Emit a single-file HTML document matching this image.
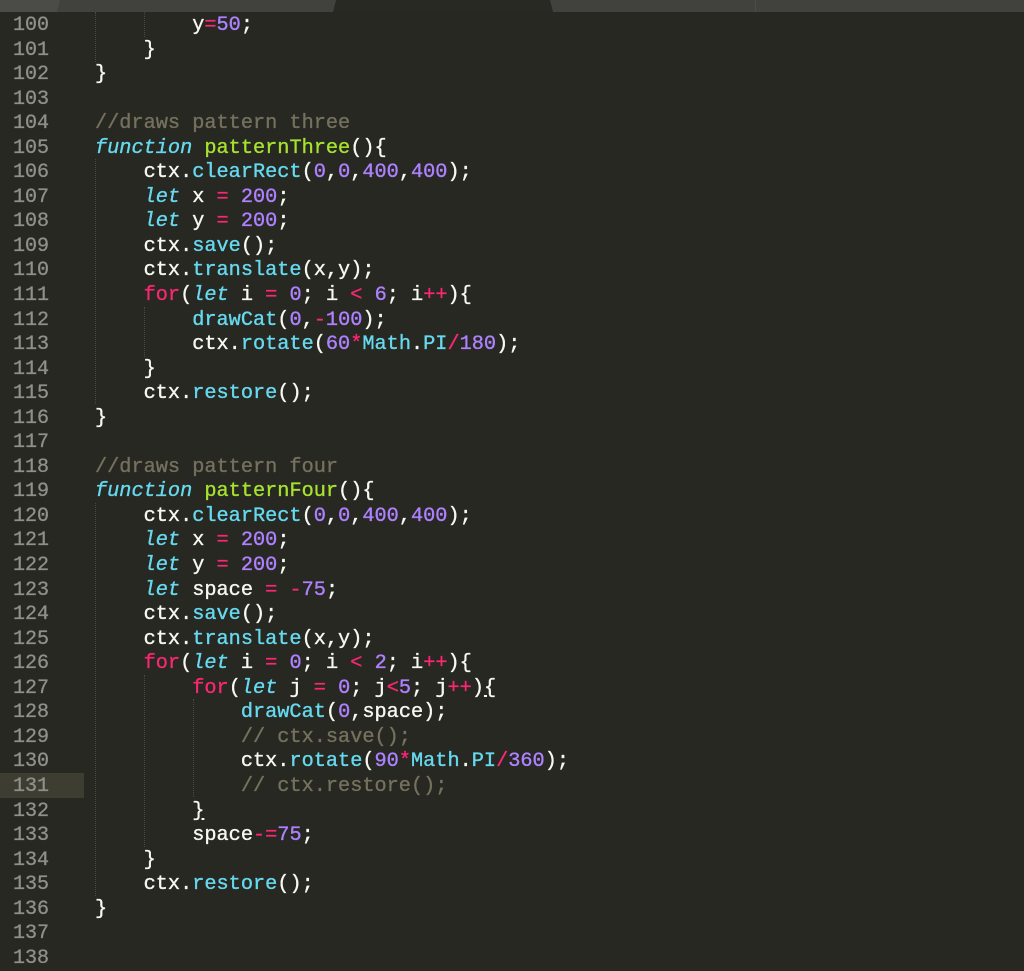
<!DOCTYPE html>
<html><head><meta charset="utf-8"><style>
html,body{margin:0;padding:0;}
body{width:1024px;height:959px;background:#272822;overflow:hidden;position:relative;font-family:"Liberation Mono",monospace;}
.tabs{position:absolute;left:0;top:0;width:1024px;height:12px;background:#41423d;}
.t1{position:absolute;left:0;top:0;width:60px;height:12px;background:#4b4b47;clip-path:polygon(0 0,100% 0,95% 100%,0 100%);}
.t2{position:absolute;left:333px;top:0;width:220px;height:12px;background:#282923;clip-path:polygon(3px 0,217px 0,100% 100%,0 100%);}
.t3{position:absolute;left:755px;top:0;width:1px;height:12px;background:#4c4d48;}
.gh{position:absolute;left:0;width:84px;height:25px;background:#3e3d32;}
.ln{position:absolute;left:0;width:49px;text-align:right;color:#8f908a;font-size:20px;line-height:24.54px;-webkit-text-stroke:0.3px #8f908a;}
.code{position:absolute;left:95px;font-size:20.25px;line-height:24.54px;color:#f8f8f2;white-space:pre;-webkit-text-stroke:0.35px currentColor;}
.k{color:#f92672}.n{color:#ae81ff}.f{color:#a6e22e}.i{color:#66d9ef;font-style:italic}.c{color:#75715e}.b{color:#66d9ef}
.g{position:absolute;border-left:1px dotted #4a4a44;width:0;}
</style></head><body>
<div class="tabs"><div class="t1"></div><div class="t2"></div><div class="t3"></div></div>
<div class="gh" style="top:773px"></div>
<div class="g" style="left:95px;top:12px;height:50px"></div>
<div class="g" style="left:144px;top:12px;height:25px"></div>
<div class="g" style="left:95px;top:159px;height:245px"></div>
<div class="g" style="left:144px;top:307px;height:50px"></div>
<div class="g" style="left:95px;top:503px;height:393px"></div>
<div class="g" style="left:144px;top:675px;height:172px"></div>
<div class="g" style="left:193px;top:699px;height:98px"></div>
<div class="ln" style="top:14px">100<br>101<br>102<br>103<br>104<br>105<br>106<br>107<br>108<br>109<br>110<br>111<br>112<br>113<br>114<br>115<br>116<br>117<br>118<br>119<br>120<br>121<br>122<br>123<br>124<br>125<br>126<br>127<br>128<br>129<br>130<br>131<br>132<br>133<br>134<br>135<br>136<br>137<br>138</div>
<div class="code" style="top:14px">        y<span class="k">=</span><span class="n">50</span>;
    }
}

<span class="c">//draws pattern three</span>
<span class="i">function</span> <span class="f">patternThree</span>(){
    ctx.<span class="b">clearRect</span>(<span class="n">0</span>,<span class="n">0</span>,<span class="n">400</span>,<span class="n">400</span>);
    <span class="i">let</span> x <span class="k">=</span> <span class="n">200</span>;
    <span class="i">let</span> y <span class="k">=</span> <span class="n">200</span>;
    ctx.<span class="b">save</span>();
    ctx.<span class="b">translate</span>(x,y);
    <span class="k">for</span>(<span class="i">let</span> i <span class="k">=</span> <span class="n">0</span>; i <span class="k">&lt;</span> <span class="n">6</span>; i<span class="k">++</span>){
        <span class="b">drawCat</span>(<span class="n">0</span>,<span class="k">-</span><span class="n">100</span>);
        ctx.<span class="b">rotate</span>(<span class="n">60</span><span class="k">*</span><span class="b">Math</span>.<span class="b">PI</span><span class="k">/</span><span class="n">180</span>);
    }
    ctx.<span class="b">restore</span>();
}

<span class="c">//draws pattern four</span>
<span class="i">function</span> <span class="f">patternFour</span>(){
    ctx.<span class="b">clearRect</span>(<span class="n">0</span>,<span class="n">0</span>,<span class="n">400</span>,<span class="n">400</span>);
    <span class="i">let</span> x <span class="k">=</span> <span class="n">200</span>;
    <span class="i">let</span> y <span class="k">=</span> <span class="n">200</span>;
    <span class="i">let</span> space <span class="k">=</span> <span class="k">-</span><span class="n">75</span>;
    ctx.<span class="b">save</span>();
    ctx.<span class="b">translate</span>(x,y);
    <span class="k">for</span>(<span class="i">let</span> i <span class="k">=</span> <span class="n">0</span>; i <span class="k">&lt;</span> <span class="n">2</span>; i<span class="k">++</span>){
        <span class="k">for</span>(<span class="i">let</span> j <span class="k">=</span> <span class="n">0</span>; j<span class="k">&lt;</span><span class="n">5</span>; j<span class="k">++</span>)<u>{</u>
            <span class="b">drawCat</span>(<span class="n">0</span>,space);
            <span class="c">// ctx.save();</span>
            ctx.<span class="b">rotate</span>(<span class="n">90</span><span class="k">*</span><span class="b">Math</span>.<span class="b">PI</span><span class="k">/</span><span class="n">360</span>);
            <span class="c">// ctx.restore();</span>
        <u>}</u>
        space<span class="k">-=</span><span class="n">75</span>;
    }
    ctx.<span class="b">restore</span>();
}
</div>
</body></html>
